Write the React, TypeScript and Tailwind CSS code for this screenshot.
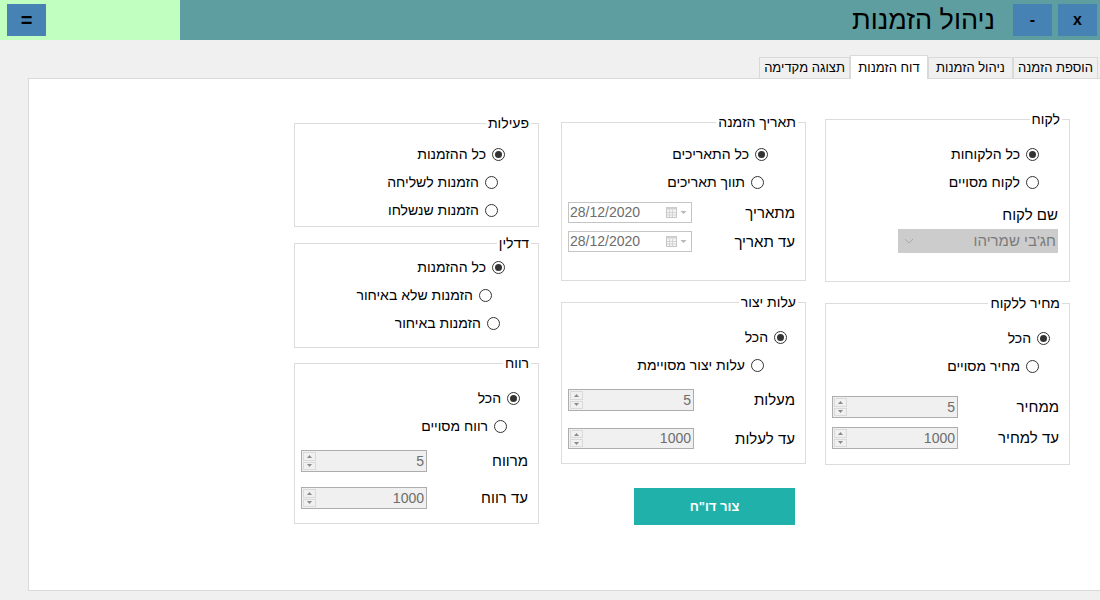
import React from "react";

type RadioProps = { label: string; checked?: boolean; pad: string };

const Radio: React.FC<RadioProps> = ({ label, checked, pad }) => (
  <div className={`flex h-[28px] items-center gap-[6px] ${pad}`}>
    <span className="flex h-[13px] w-[13px] shrink-0 items-center justify-center rounded-full border border-[#333333] bg-white">
      {checked && <span className="h-[7px] w-[7px] rounded-full bg-[#333333]" />}
    </span>
    <span className="text-[14px] leading-[18px] text-black">{label}</span>
  </div>
);

type GroupProps = { title: string; className: string; children: React.ReactNode };

const GroupBox: React.FC<GroupProps> = ({ title, className, children }) => (
  <div className={`relative flex flex-col border border-[#dcdcdc] ${className}`}>
    <span className="absolute -top-[9px] right-[7px] bg-white px-[2px] text-[14px] leading-[16px] text-black">
      {title}
    </span>
    {children}
  </div>
);

const Spinner: React.FC<{ value: string }> = ({ value }) => (
  <div dir="ltr" className="flex h-full w-[126px] border border-[#adadad] bg-[#f0f0f0]">
    <div className="flex w-[15px] flex-col gap-px p-px">
      <div className="flex flex-1 items-center justify-center border border-[#dadada]">
        <svg width="5" height="3" viewBox="0 0 5 3">
          <path d="M0 3 L2.5 0 L5 3 Z" fill="#8a8a8a" />
        </svg>
      </div>
      <div className="flex flex-1 items-center justify-center border border-[#dadada]">
        <svg width="5" height="3" viewBox="0 0 5 3">
          <path d="M0 0 L2.5 3 L5 0 Z" fill="#8a8a8a" />
        </svg>
      </div>
    </div>
    <div className="flex flex-1 items-center justify-end pr-[2px] text-[14px] text-[#6d6d6d]">{value}</div>
  </div>
);

const DateBox: React.FC = () => (
  <div dir="ltr" className="flex h-full w-[124px] items-center border border-[#c4c4c4] bg-white pl-[1px] pr-[3px]">
    <span className="flex-1 text-[14px] text-[#6d6d6d]">28/12/2020</span>
    <svg width="11" height="11" viewBox="0 0 11 11">
      <rect x="0.5" y="0.5" width="10" height="10" fill="#f4f4f4" stroke="#c8c8c8" />
      <rect x="0.5" y="0.5" width="10" height="2" fill="#d0d0d0" />
      <path d="M3.5 3v7M6.5 3v7M1 5.5h9M1 8h9" stroke="#d4d4d4" strokeWidth="1" />
    </svg>
    <svg width="9" height="5" viewBox="0 0 9 5" className="ml-[2px]">
      <path d="M1.5 1 L4.5 4 L7.5 1 Z" fill="#b8b8b8" />
    </svg>
  </div>
);

type FieldProps = { label: string; className: string; children: React.ReactNode };

const FieldRow: React.FC<FieldProps> = ({ label, className, children }) => (
  <div className={`flex items-center justify-between pl-[6px] pr-[10px] ${className}`}>
    <span className="text-[15px] leading-[18px] text-black">{label}</span>
    {children}
  </div>
);

const tabs = [
  { name: "הוספת הזמנה", w: "w-[85px]" },
  { name: "ניהול הזמנות", w: "w-[85px]" },
  { name: "דוח הזמנות", w: "w-[78px]", active: true },
  { name: "תצוגה מקדימה", w: "w-[91px]" },
];

export default function App() {
  return (
    <div className="flex h-[600px] w-[1100px] flex-col overflow-hidden bg-[#f0f0f0] font-['Liberation_Sans','DejaVu_Sans',sans-serif]">
      {/* title bar */}
      <div className="flex h-[40px] shrink-0">
        <div className="w-[180px] bg-[#c0ffc0] pl-[7px] pt-[4px]">
          <button className="h-[32px] w-[39px] bg-[#4682b4] text-[20px] font-bold leading-[32px] text-black">=</button>
        </div>
        <div className="flex flex-1 items-center justify-end bg-[#5f9ea0] pr-[3px]">
          <span className="mr-[18px] text-[27px] leading-[34px] text-black">ניהול הזמנות</span>
          <button className="h-[32px] w-[39px] bg-[#4682b4] text-[16px] font-bold text-black">-</button>
          <button className="ml-[6px] h-[32px] w-[39px] bg-[#4682b4] text-[16px] font-bold text-black">x</button>
        </div>
      </div>

      {/* tabs */}
      <div dir="rtl" className="mt-[15px] flex h-[23px] shrink-0 items-end pr-[2px]">
        {tabs.map((t) =>
          t.active ? (
            <div
              key={t.name}
              className={`relative z-10 -mb-px flex h-[24px] items-center justify-center border border-b-0 border-[#d9d9d9] bg-white text-[13px] text-black ${t.w}`}
            >
              {t.name}
            </div>
          ) : (
            <div
              key={t.name}
              className={`flex h-[21px] items-center justify-center border border-b-0 border-[#d9d9d9] bg-[#f0f0f0] text-[13px] text-black ${t.w}`}
            >
              {t.name}
            </div>
          )
        )}
      </div>

      {/* tab page */}
      <div dir="rtl" className="ml-[28px] flex h-[513px] shrink-0 border border-r-0 border-[#d9d9d9] bg-white pr-[30px]">
        {/* column 1 */}
        <div className="flex w-[245px] flex-col pt-[40px]">
          <GroupBox title="לקוח" className="h-[163px]">
            <div className="mt-[20px]" />
            <Radio label="כל הלקוחות" checked pad="pr-[30px]" />
            <Radio label="לקוח מסויים" pad="pr-[30px]" />
            <div className="mt-[9px] h-[20px] pr-[11px] text-[15px] leading-[20px] text-black">שם לקוח</div>
            <div className="mr-[11px] mt-[4px] flex h-[24px] w-[160px] items-center justify-between self-start bg-[#cccccc] pl-[6px] pr-[2px]">
              <span className="text-[15px] text-[#7a7a7a]">חג'בי שמריהו</span>
              <svg width="10" height="6" viewBox="0 0 10 6">
                <path d="M1 1 L5 5 L9 1" fill="none" stroke="#a8a8a8" strokeWidth="1" />
              </svg>
            </div>
          </GroupBox>

          <GroupBox title="מחיר ללקוח" className="mt-[21px] h-[162px]">
            <div className="mt-[20px]" />
            <Radio label="הכל" checked pad="pr-[19px]" />
            <Radio label="מחיר מסויים" pad="pr-[30px]" />
            <FieldRow label="ממחיר" className="mt-[16px] h-[22px]">
              <Spinner value="5" />
            </FieldRow>
            <FieldRow label="עד למחיר" className="mt-[9px] h-[22px]">
              <Spinner value="1000" />
            </FieldRow>
          </GroupBox>
        </div>

        {/* column 2 */}
        <div className="mr-[19px] flex w-[245px] flex-col pt-[43px]">
          <GroupBox title="תאריך הזמנה" className="h-[159px]">
            <div className="mt-[17px]" />
            <Radio label="כל התאריכים" checked pad="pr-[37px]" />
            <Radio label="תווך תאריכים" pad="pr-[41px]" />
            <FieldRow label="מתאריך" className="mt-[6px] h-[21px]">
              <DateBox />
            </FieldRow>
            <FieldRow label="עד תאריך" className="mt-[8px] h-[21px]">
              <DateBox />
            </FieldRow>
          </GroupBox>

          <GroupBox title="עלות יצור" className="mt-[21px] h-[162px]">
            <div className="mt-[20px]" />
            <Radio label="הכל" checked pad="pr-[18px]" />
            <Radio label="עלות יצור מסויימת" pad="pr-[41px]" />
            <FieldRow label="מעלות" className="mt-[10px] h-[22px]">
              <Spinner value="5" />
            </FieldRow>
            <FieldRow label="עד לעלות" className="mt-[17px] h-[21px]">
              <Spinner value="1000" />
            </FieldRow>
          </GroupBox>

          <button className="mr-[11px] mt-[24px] h-[37px] w-[161px] self-start bg-[#20b2aa] text-[13px] font-bold text-white">
            {'צור דו"ח'}
          </button>
        </div>

        {/* column 3 */}
        <div className="mr-[22px] flex w-[245px] flex-col pt-[44px]">
          <GroupBox title="פעילות" className="h-[104px]">
            <div className="mt-[16px]" />
            <Radio label="כל ההזמנות" checked pad="pr-[33px]" />
            <Radio label="הזמנות לשליחה" pad="pr-[40px]" />
            <Radio label="הזמנות שנשלחו" pad="pr-[40px]" />
          </GroupBox>

          <GroupBox title="דדלין" className="mt-[16px] h-[105px]">
            <div className="mt-[9px]" />
            <Radio label="כל ההזמנות" checked pad="pr-[33px]" />
            <Radio label="הזמנות שלא באיחור" pad="pr-[46px]" />
            <Radio label="הזמנות באיחור" pad="pr-[38px]" />
          </GroupBox>

          <GroupBox title="רווח" className="mt-[15px] h-[161px]">
            <div className="mt-[20px]" />
            <Radio label="הכל" checked pad="pr-[18px]" />
            <Radio label="רווח מסויים" pad="pr-[31px]" />
            <FieldRow label="מרווח" className="mt-[10px] h-[22px]">
              <Spinner value="5" />
            </FieldRow>
            <FieldRow label="עד רווח" className="mt-[15px] h-[22px]">
              <Spinner value="1000" />
            </FieldRow>
          </GroupBox>
        </div>
      </div>
    </div>
  );
}
